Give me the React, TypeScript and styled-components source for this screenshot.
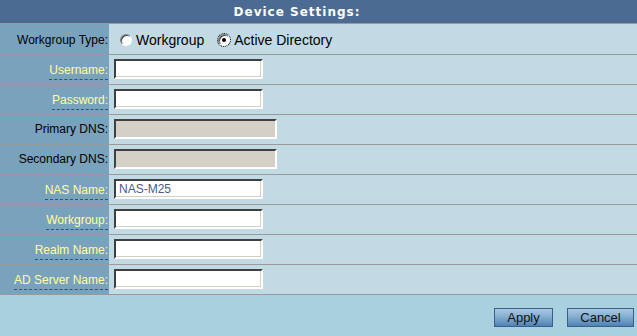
import styled, { createGlobalStyle } from "styled-components";

const GlobalStyle = createGlobalStyle`
  html, body {
    margin: 0;
    padding: 0;
    background: #a9d0df;
    font-family: "Liberation Sans", Arial, sans-serif;
    font-size: 12px;
  }
`;

const Page = styled.div`
  width: 637px;
  height: 336px;
  background: #a9d0df;
  display: flex;
  flex-direction: column;
`;

const Header = styled.div`
  height: 23px;
  background: #4b6b93;
  border-bottom: 1px solid #9a9a9a;
  color: #ffffff;
  font-family: "DejaVu Sans", Verdana, sans-serif;
  font-weight: bold;
  font-size: 12px;
  letter-spacing: 1px;
  display: flex;
  align-items: center;
  justify-content: center;
  padding-right: 43px;
`;

const Row = styled.div<{ $tall?: boolean }>`
  display: grid;
  grid-template-columns: 109px 1fr;
  height: ${(p) => (p.$tall ? 30 : 29)}px;
  border-bottom: 1px solid #9a9a9a;
`;

const LabelCell = styled.div<{ $drop?: number }>`
  background: #79a2bd;
  display: flex;
  align-items: center;
  justify-content: flex-end;
  padding-right: 1px;
  padding-top: ${(p) => p.$drop ?? 0}px;
`;

const Label = styled.span<{ $help?: boolean }>`
  color: ${(p) => (p.$help ? "#ffff9c" : "#000000")};
  border-bottom: ${(p) => (p.$help ? "1px dashed #1d5a8a" : "none")};
  font-size: 12px;
  line-height: 13px;
  padding-bottom: ${(p) => (p.$help ? 2 : 0)}px;
  margin-top: ${(p) => (p.$help ? 5 : 0)}px;
`;

const ValueCell = styled.div`
  background: #c1dae3;
  display: flex;
  align-items: center;
  padding-left: 5px;
`;

const TextBox = styled.input<{ $wide?: boolean }>`
  box-sizing: border-box;
  width: ${(p) => (p.$wide ? 163 : 149)}px;
  height: 20px;
  margin: 0 0 1px 0;
  padding: 0 3px;
  font-family: "Liberation Sans", Arial, sans-serif;
  font-size: 12px;
  color: #4c5a88;
  background: ${(p) => (p.disabled ? "#d4d0c8" : "#ffffff")};
  border-style: solid;
  border-width: 2px;
  border-color: #404040 #ffffff #ffffff #404040;
  box-shadow: inset -1px -1px 0 #d4d0c8;
  outline: none;
`;

const RadioGroup = styled.div`
  display: flex;
  align-items: center;
  padding-left: 6px;
  margin-top: 2px;
`;

const RadioOption = styled.label`
  display: flex;
  align-items: center;
  color: #000000;
  font-size: 14px;
  margin-right: 14px;
`;

const RadioDot = styled.span<{ $checked?: boolean }>`
  position: relative;
  box-sizing: border-box;
  width: 12px;
  height: 12px;
  border-radius: 50%;
  background: #ffffff;
  border: 1px solid;
  border-color: #808080 #ffffff #ffffff #808080;
  box-shadow: inset 1px 1px 0 #404040;
  margin-right: 4px;
  outline: ${(p) => (p.$checked ? "1px dotted #000" : "none")};
  &::after {
    content: "";
    display: ${(p) => (p.$checked ? "block" : "none")};
    position: absolute;
    left: 3px;
    top: 3px;
    width: 4px;
    height: 4px;
    border-radius: 50%;
    background: #000;
  }
`;

const Footer = styled.div`
  display: flex;
  justify-content: flex-end;
  gap: 14px;
  padding: 13px 3px 0 0;
`;

const Button = styled.button<{ $w: number }>`
  width: ${(p) => p.$w}px;
  height: 19px;
  padding: 0;
  font-family: "Liberation Sans", Arial, sans-serif;
  font-size: 13px;
  color: #111;
  background: linear-gradient(#a9c9e1 0%, #85aed1 45%, #4f83b3 100%);
  border: 1px solid #3b5f8a;
  line-height: 17px;
`;

type Field = { label: string; help?: boolean; value?: string; disabled?: boolean };

const fields: Field[] = [
  { label: "Username:", help: true },
  { label: "Password:", help: true },
  { label: "Primary DNS:", disabled: true },
  { label: "Secondary DNS:", disabled: true },
  { label: "NAS Name:", help: true, value: "NAS-M25" },
  { label: "Workgroup:", help: true },
  { label: "Realm Name:", help: true },
  { label: "AD Server Name:", help: true },
];

export default function App() {
  return (
    <>
      <GlobalStyle />
      <Page>
        <Header>Device Settings:</Header>
        <Row $tall>
          <LabelCell $drop={3}>
            <Label>Workgroup Type:</Label>
          </LabelCell>
          <ValueCell>
            <RadioGroup>
              <RadioOption>
                <RadioDot />
                Workgroup
              </RadioOption>
              <RadioOption>
                <RadioDot $checked />
                Active Directory
              </RadioOption>
            </RadioGroup>
          </ValueCell>
        </Row>
        {fields.map((f) => (
          <Row key={f.label}>
            <LabelCell>
              <Label $help={f.help}>{f.label}</Label>
            </LabelCell>
            <ValueCell>
              <TextBox
                $wide={f.disabled}
                disabled={f.disabled}
                defaultValue={f.value}
                type={f.label === "Password:" ? "password" : "text"}
              />
            </ValueCell>
          </Row>
        ))}
        <Footer>
          <Button $w={59}>Apply</Button>
          <Button $w={67}>Cancel</Button>
        </Footer>
      </Page>
    </>
  );
}
